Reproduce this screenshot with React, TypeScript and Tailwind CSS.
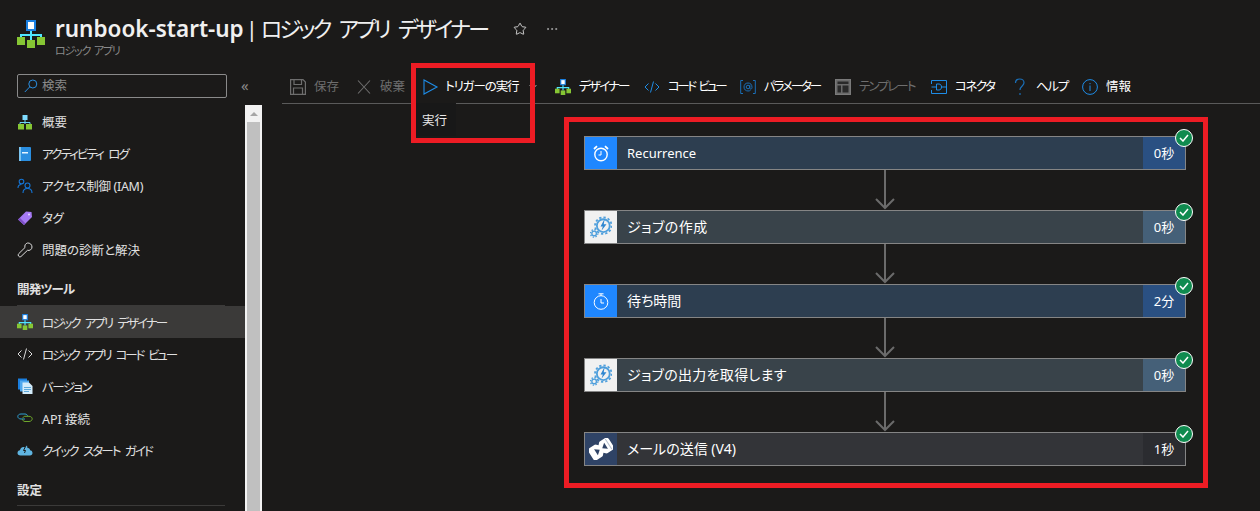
import { ChevronDown, Ellipsis, Star } from "lucide-react";
import type { ReactNode } from "react";

function LogicIcon({ size }: { size: number }) {
  return (
    <svg width={size} height={size} viewBox="0 0 28 28">
      <path d="M14 10V20M4 20V15H24V20" fill="none" stroke="#50e6ff" strokeWidth="2" />
      <rect x="10" y="1" width="8" height="9" fill="#fff" stroke="#1a7fe0" strokeWidth="2" />
      <rect x="0" y="17" width="8" height="8" fill="#86c634" />
      <rect x="10" y="20" width="8" height="8" fill="#86c634" />
      <rect x="20" y="17" width="8" height="8" fill="#86c634" />
    </svg>
  );
}

function OverviewIcon() {
  return (
    <svg width="16" height="16" viewBox="0 0 16 16">
      <path d="M8 6V10M3 11V8.500H13V11" fill="none" stroke="#6fd5f5" strokeWidth="1" />
      <rect x="5.500" y="1" width="5" height="5" fill="#7fdcff" />
      <rect x="1" y="10" width="6" height="5.500" fill="#86c634" />
      <rect x="9" y="10" width="6" height="5.500" fill="#86c634" />
    </svg>
  );
}

function ActivityIcon() {
  return (
    <svg width="16" height="16" viewBox="0 0 16 16">
      <rect x="2" y="1" width="12" height="14" rx="1" fill="#2a8ee0" />
      <rect x="2" y="1" width="2" height="14" fill="#7cc4f0" />
      <rect x="5" y="6" width="6" height="1.500" fill="#e6f4ff" />
    </svg>
  );
}

function AccessIcon() {
  return (
    <svg width="16" height="16" viewBox="0 0 16 16" fill="none" stroke="#1474d4" strokeWidth="1.100">
      <circle cx="4.500" cy="3.500" r="2.300" />
      <path d="M1 10C1 7.500 2.500 6.500 4.500 6.500" />
      <circle cx="10.500" cy="7.500" r="2.500" />
      <path d="M6 15C6 12 8 10.500 10.500 10.500S15 12 15 15" />
    </svg>
  );
}

function TagIcon() {
  return (
    <svg width="16" height="16" viewBox="0 0 16 16">
      <path d="M1 9.500L9 1.500L14.500 2L15 7L7 15Z" fill="#a67af4" />
      <path d="M1 9.500L7 15L8.500 13.500L3 8Z" fill="#7c4fc4" />
      <circle cx="12" cy="4.500" r="1" fill="#e8dcff" />
    </svg>
  );
}

function WrenchIcon() {
  return (
    <svg width="16" height="16" viewBox="0 0 16 16" fill="none" stroke="#dcdcdc" strokeWidth="1">
      <path d="M10.500 1C12.800 0.700 15 2.500 15 5C15 7.500 12.500 9 10.500 8.300L4 14.500C3 15.500 1.200 14.500 1.200 13C1.200 12.500 1.400 12 1.800 11.600L8 5.500C7.300 3.500 8.500 1.500 10.500 1Z" />
    </svg>
  );
}

function CodeIcon({ color }: { color: string }) {
  return (
    <svg width="16" height="16" viewBox="0 0 16 16" fill="none" stroke={color} strokeWidth="1">
      <path d="M4.500 4.500L1 8L4.500 11.500M11.500 4.500L15 8L11.500 11.500M9.500 2.500L6.500 13.500" />
    </svg>
  );
}

function VersionIcon() {
  return (
    <svg width="16" height="16" viewBox="0 0 16 16">
      <rect x="1" y="0.500" width="9" height="11" fill="#1a7fe0" />
      <rect x="3" y="2.500" width="9" height="11" fill="#50a8ee" />
      <path d="M5.500 4.500H12L15.500 8V16H5.500Z" fill="#d4ecfb" />
      <path d="M7 9.500H14M7 11.500H14M7 13.500H12" stroke="#5ca9dc" strokeWidth="1" />
    </svg>
  );
}

function ApiIcon() {
  return (
    <svg width="16" height="16" viewBox="0 0 16 16" fill="none">
      <path d="M8 9H4C2 9 0.800 7.800 0.800 6.500S2 4 4 4H8C9.500 4 10.500 5 10.500 6.200" stroke="#2f9fd0" strokeWidth="1" />
      <path d="M6 8C6 7 7 6.300 8 6.300H12C14 6.300 15.200 7.500 15.200 8.800S14 11.500 12 11.500H8C6.500 11.500 5.500 10.300 5.500 9.200" stroke="#6ea82c" strokeWidth="1" />
    </svg>
  );
}

function QuickIcon() {
  return (
    <svg width="16" height="16" viewBox="0 0 16 16">
      <path d="M3.500 13.500C1.500 13.500 0.500 12.300 0.500 11C0.500 9.500 1.500 8.500 3 8.300C3.300 6.300 4.500 5 6.500 5C7 5 7.500 5.100 8 5.300L10 3.500L10.500 6C12 5.700 13 6.700 13 8.200C14.500 8.300 15.500 9.500 15.500 11C15.500 12.500 14.500 13.500 13 13.500Z" fill="#5fb4e0" />
      <path d="M8.500 4.500L6.500 8.500H8.500L7.500 11" fill="none" stroke="#1b1a19" strokeWidth="1" />
    </svg>
  );
}

function SaveIcon() {
  return (
    <svg width="16" height="16" viewBox="0 0 16 16" fill="none" stroke="#6e6e6e" strokeWidth="1.200">
      <path d="M0.600 0.600H13L15.400 3V15.400H0.600Z" />
      <path d="M4 0.600V5.500H11.500V0.600M3.500 15.400V9H12.500V15.400" />
    </svg>
  );
}

function DiscardIcon() {
  return (
    <svg width="16" height="16" viewBox="0 0 16 16" stroke="#6e6e6e" strokeWidth="1.100">
      <path d="M2 1.500L14 14.500M14 1.500L2 14.500" />
    </svg>
  );
}

function PlayIcon() {
  return (
    <svg width="16" height="16" viewBox="0 0 16 16" fill="none" stroke="#1e8ce6" strokeWidth="1.100">
      <path d="M1 1V15L14 8Z" />
    </svg>
  );
}

function ParamIcon() {
  return (
    <svg width="16" height="16" viewBox="0 0 16 16" fill="none" stroke="#1a6fb8" strokeWidth="1">
      <path d="M3 1.500H0.700V14.500H3M13 1.500H15.300V14.500H13" />
      <circle cx="8" cy="8" r="1.800" />
      <path d="M9.800 6V9C9.800 10.500 12 10.500 12 8.500C12 5.500 10.500 4 8 4C5.500 4 4 5.800 4 8C4 10.500 5.800 12 8 12C9 12 9.800 11.800 10.500 11.300" />
    </svg>
  );
}

function TemplateIcon() {
  return (
    <svg width="16" height="16" viewBox="0 0 16 16">
      <rect x="0.500" y="0.500" width="15" height="15" fill="#6b6b6b" stroke="#7a7a7a" />
      <rect x="2.500" y="2.500" width="11" height="2.500" fill="#2a2a2a" />
      <rect x="2.500" y="6.500" width="3.500" height="7" fill="#2a2a2a" />
      <rect x="7.500" y="6.500" width="6" height="7" fill="#2a2a2a" />
    </svg>
  );
}

function ConnectorIcon() {
  return (
    <svg width="16" height="14" viewBox="0 0 16 14" fill="none" stroke="#1e8ce6" strokeWidth="1">
      <path d="M0.500 4V0.500H15.500V13.500H0.500V10" />
      <path d="M0.500 7H5M10 7H15.500" />
      <path d="M5.500 4H8C9.500 4 10.500 5.300 10.500 7S9.500 10 8 10H5.500Z" />
    </svg>
  );
}

function HelpIcon() {
  return (
    <svg width="16" height="18" viewBox="0 0 16 18" fill="none" stroke="#1a6fb8" strokeWidth="1.200">
      <path d="M3.500 5C3.500 2.500 5.500 1 7.800 1C10 1 12 2.500 12 4.800C12 8 8 8 8 12" />
      <path d="M8 15V17" />
    </svg>
  );
}

function InfoIcon() {
  return (
    <svg width="16" height="16" viewBox="0 0 16 16" fill="none" stroke="#1e8ce6" strokeWidth="1">
      <circle cx="8" cy="8" r="7.400" />
      <path d="M8 6.500V12M8 4V5.200" />
    </svg>
  );
}

function SearchGlass() {
  return (
    <svg width="14" height="14" viewBox="0 0 14 14" fill="none" stroke="#2a8ee0" strokeWidth="1">
      <circle cx="8.800" cy="5" r="4" />
      <path d="M5.800 7.800L0.800 13" />
    </svg>
  );
}

function AlarmIcon() {
  return (
    <svg width="16" height="17" viewBox="0 0 16 17" fill="none" stroke="#fff" strokeWidth="1.400">
      <circle cx="8" cy="9.500" r="6.200" />
      <path d="M8 6V10H5.500" strokeWidth="1" />
      <path d="M1 4L4 1.200M15 4L12 1.200" strokeWidth="1.800" />
    </svg>
  );
}

function TimerIcon() {
  return (
    <svg width="16" height="17" viewBox="0 0 16 17" fill="none" stroke="#fff" strokeWidth="1">
      <circle cx="8" cy="9.500" r="6.800" />
      <path d="M8 6V10H11M5.500 0.800H10.500M8 0.800V2.700" />
    </svg>
  );
}

function JobIcon() {
  return (
    <svg width="22" height="22" viewBox="0 0 24 24">
      <circle cx="14.500" cy="10.500" r="7" fill="none" stroke="#4f9fdc" strokeWidth="2" />
      <circle cx="14.500" cy="10.500" r="9" fill="none" stroke="#4f9fdc" strokeWidth="2" strokeDasharray="2.500 2.200" />
      <path d="M16 3L11.500 11.500H14L12.500 16L18 9H15Z" fill="#2f86d0" />
      <circle cx="4.500" cy="19" r="2.500" fill="none" stroke="#4f9fdc" strokeWidth="1.500" />
      <circle cx="4.500" cy="19" r="4" fill="none" stroke="#4f9fdc" strokeWidth="1.500" strokeDasharray="1.500 1.600" />
    </svg>
  );
}

function MailIcon() {
  return (
    <svg width="24" height="22" viewBox="0 0 24 22">
      <g transform="rotate(-33 12 11)">
        <rect x="0" y="4" width="24" height="14" rx="3" fill="#fff" />
        <path d="M6 7.500L10.500 11L6 14.500Z" fill="#2f4366" />
        <path d="M18 7.500L13.500 11L18 14.500Z" fill="#2f4366" />
        <path d="M9 3.500H15L12 6.500Z" fill="#2f4366" />
        <path d="M9 18.500H15L12 15.500Z" fill="#2f4366" />
        <path d="M21 5V17" stroke="#b8c2d0" strokeWidth="1" />
      </g>
    </svg>
  );
}

function FlowArrow() {
  return (
    <svg width="20" height="40" viewBox="0 0 20 40" fill="none" stroke="#6b6b6b" strokeWidth="2" className="block">
      <path d="M10 0V38M1 29L10 38L19 29" />
    </svg>
  );
}

function NavItem({ icon, label, tracking = "", offset = "pt-[2px]", active = false }: { icon: ReactNode; label: string; tracking?: string; offset?: string; active?: boolean }) {
  return (
    <div className={active ? "flex h-8 items-center gap-[9px] bg-[#3b3a39] pl-[17px]" : "flex h-8 items-center gap-[9px] pl-[17px]"}>
      <span className="flex w-4 justify-center">{icon}</span>
      <span className={`whitespace-nowrap text-[12.5px] text-[#e0e0e0] ${offset} ${tracking}`}>{label}</span>
    </div>
  );
}

function ToolButton({ icon, label, width, tracking = "", disabled = false }: { icon: ReactNode; label: string; width: string; tracking?: string; disabled?: boolean }) {
  return (
    <div className={`flex items-center gap-[8px] ${width}`}>
      <span className="flex w-4 shrink-0 justify-center">{icon}</span>
      <span className={`whitespace-nowrap pt-[1px] text-[12.5px] ${disabled ? "text-[#6e6e6e]" : "text-white"} ${tracking}`}>{label}</span>
    </div>
  );
}

const steps = [
  { name: "Recurrence", time: "0秒", icon: <AlarmIcon />, text: "pt-[1px] text-[13px]", iconBg: "bg-[#1f87ff]", body: "bg-[#2d3e50]", timeBg: "bg-[#2a5082]" },
  { name: "ジョブの作成", time: "0秒", icon: <JobIcon />, text: "pb-[2px] text-[14px] tracking-[0.5px]", iconBg: "bg-[#f1f1f1]", body: "bg-[#39434a]", timeBg: "bg-[#456078]" },
  { name: "待ち時間", time: "2分", icon: <TimerIcon />, text: "pb-[2px] text-[14px]", iconBg: "bg-[#1f87ff]", body: "bg-[#2d3e50]", timeBg: "bg-[#2a5082]" },
  { name: "ジョブの出力を取得します", time: "0秒", icon: <JobIcon />, text: "pb-[2px] text-[14px] tracking-[0.3px]", iconBg: "bg-[#f1f1f1]", body: "bg-[#39434a]", timeBg: "bg-[#456078]" },
  { name: "メールの送信 (V4)", time: "1秒", icon: <MailIcon />, text: "pb-[2px] text-[14px]", iconBg: "bg-[#2f4366]", body: "bg-[#333438]", timeBg: "bg-[#2b2c30]" },
];

function FlowCard({ step }: { step: (typeof steps)[number] }) {
  return (
    <div className={`relative flex h-[34px] w-[602px] items-stretch border border-[#858585] ${step.body}`}>
      <div className={`flex w-[32px] items-center justify-center ${step.iconBg}`}>{step.icon}</div>
      <div className={`flex flex-1 items-center pl-[10px] text-white ${step.text}`}>{step.name}</div>
      <div className={`flex w-[42px] items-center justify-center pt-[1px] text-[13px] text-white ${step.timeBg}`}>{step.time}</div>
      <div className="absolute right-[-8px] top-[-8px] flex h-[18px] w-[18px] items-center justify-center rounded-full border border-white bg-[#0f8b4f]">
        <svg width="10" height="8" viewBox="0 0 10 8" fill="none" stroke="#fff" strokeWidth="1.500">
          <path d="M1 4L4 7L9 1" />
        </svg>
      </div>
    </div>
  );
}

export default function App() {
  return (
    <div
      className="relative flex h-[511px] w-[1260px] flex-col overflow-hidden bg-[#1b1a19] [font-feature-settings:'palt']"
      style={{ fontFamily: '"Noto Sans", "Noto Sans CJK JP", sans-serif' }}
    >
      {/* タイトル */}
      <header className="flex h-[70px] shrink-0 items-start pl-[17px] pt-[20px]">
        <LogicIcon size={28} />
        <div className="ml-[10px] mt-[-7px]">
          <div className="flex items-center">
            <h1 className="whitespace-nowrap text-[22px] leading-[30px] text-[#f0f0f0]">
              <span className="text-[22.5px] font-semibold">runbook-start-up</span>
              <span className="ml-[2px] mr-[3px]">|</span>
              <span className="tracking-[-2.8px] [word-spacing:6px]">ロジック アプリ デザイナー</span>
            </h1>
            <Star size={14} strokeWidth={1.5} className="ml-[26px] text-[#e0e0e0]" />
            <Ellipsis size={14} strokeWidth={1.5} className="ml-[18px] text-[#a8a8a8]" />
          </div>
          <div className="text-[11px] leading-[14px] tracking-[-1.2px] text-[#8a8a8a] [word-spacing:2px]">ロジック アプリ</div>
        </div>
      </header>

      <div className="flex min-h-0 flex-1">
        {/* サイドバー */}
        <aside className="flex w-[262px] shrink-0 flex-col">
          <div className="flex h-[35px] shrink-0 items-start pl-[17px] pt-[4px]">
            <div className="flex h-[24px] w-[210px] items-center gap-[4px] rounded-[2px] border border-[#8a8a8a] pl-[6px]">
              <SearchGlass />
              <span className="pt-[1px] text-[12.5px] text-[#8a8a8a]">検索</span>
            </div>
            <span className="ml-[14px] text-[15px] leading-[22px] text-[#8a8a8a]">«</span>
          </div>
          <div className="flex min-h-0 flex-1">
            <nav className="w-[245px] shrink-0 overflow-hidden pt-[1px]">
              <NavItem icon={<OverviewIcon />} label="概要" />
              <NavItem icon={<ActivityIcon />} label="アクティビティ ログ" tracking="tracking-[-1.9px] [word-spacing:4px]" />
              <NavItem icon={<AccessIcon />} label="アクセス制御 (IAM)" tracking="tracking-[-0.3px]" />
              <NavItem icon={<TagIcon />} label="タグ" tracking="tracking-[-0.5px]" />
              <NavItem icon={<WrenchIcon />} label="問題の診断と解決" />
              <div className="ml-[17px] mr-[20px] mt-[16px] h-[24px] border-b border-[#3b3a39] text-[12.5px] font-bold leading-[16px] tracking-[-0.8px] text-[#e0e0e0]">開発ツール</div>
              <NavItem icon={<LogicIcon size={16} />} label="ロジック アプリ デザイナー" tracking="tracking-[-2px] [word-spacing:4px]" offset="pt-[4px]" active />
              <NavItem icon={<CodeIcon color="#dcdcdc" />} label="ロジック アプリ コード ビュー" tracking="tracking-[-2.2px] [word-spacing:4px]" offset="pt-[4px]" />
              <NavItem icon={<VersionIcon />} label="バージョン" tracking="tracking-[-1.5px]" offset="pt-[4px]" />
              <NavItem icon={<ApiIcon />} label="API 接続" offset="pt-[4px]" />
              <NavItem icon={<QuickIcon />} label="クイック スタート ガイド" tracking="tracking-[-1.9px] [word-spacing:4px]" offset="pt-[4px]" />
              <div className="ml-[17px] mr-[20px] mt-[17px] h-[23px] border-b border-[#3b3a39] text-[12.5px] font-bold leading-[16px] text-[#e0e0e0]">設定</div>
            </nav>
            <div className="flex w-[17px] shrink-0 flex-col border-x-2 border-[#f2f2f2] bg-[#c0c0c0]">
              <div className="flex h-[17px] items-center justify-center bg-[#f2f2f2]">
                <div className="h-0 w-0 border-x-[4px] border-b-[4px] border-x-transparent border-b-[#a6a6a6]" />
              </div>
            </div>
          </div>
        </aside>

        {/* デザイナー */}
        <main className="flex min-w-0 flex-1 flex-col">
          <div className="ml-[20px] flex h-[34px] shrink-0 items-center border-b border-[#5a5a5a] pl-[8px]">
            <ToolButton icon={<SaveIcon />} label="保存" width="w-[66px]" disabled />
            <ToolButton icon={<DiscardIcon />} label="破棄" width="w-[67px]" disabled />
            <ToolButton icon={<PlayIcon />} label="トリガーの実行" width="w-[104px]" tracking="ml-[-2px] tracking-[-1.1px]" />
            <ChevronDown size={12} className="mr-[16px] text-[#d0d0d0]" />
            <ToolButton icon={<LogicIcon size={16} />} label="デザイナー" width="w-[89px]" tracking="tracking-[-1.8px]" />
            <ToolButton icon={<CodeIcon color="#1e8ce6" />} label="コード ビュー" width="w-[96px]" tracking="tracking-[-2.5px] [word-spacing:3px]" />
            <ToolButton icon={<ParamIcon />} label="パラメーター" width="w-[95px]" tracking="tracking-[-2.1px]" />
            <ToolButton icon={<TemplateIcon />} label="テンプレート" width="w-[96px]" tracking="tracking-[-1.8px]" disabled />
            <ToolButton icon={<ConnectorIcon />} label="コネクタ" width="w-[81px]" tracking="tracking-[-1.5px]" />
            <ToolButton icon={<HelpIcon />} label="ヘルプ" width="w-[70px]" tracking="tracking-[-1.3px]" />
            <ToolButton icon={<InfoIcon />} label="情報" width="w-[60px]" />
          </div>

          <div className="ml-[302px] mt-[13px] w-[644px] border-[5px] border-[#ed1c24] pl-[15px] pt-[14px]">
            <div className="flex h-[347px] flex-col">
              {steps.map((step, i) => (
                <div key={step.name} className="flex flex-col">
                  {i > 0 && (
                    <div className="flex w-[602px] justify-center">
                      <FlowArrow />
                    </div>
                  )}
                  <FlowCard step={step} />
                </div>
              ))}
            </div>
          </div>
        </main>
      </div>

      {/* 実行メニュー */}
      <div className="absolute left-[416px] top-[103px] flex h-[33px] w-[40px] items-center bg-[#181818] pl-[6px] pt-[4px] text-[12.5px] text-[#e8e8e8]">実行</div>
      <div className="pointer-events-none absolute left-[411px] top-[63px] h-[80px] w-[124px] border-[5px] border-[#ed1c24]" />
    </div>
  );
}
